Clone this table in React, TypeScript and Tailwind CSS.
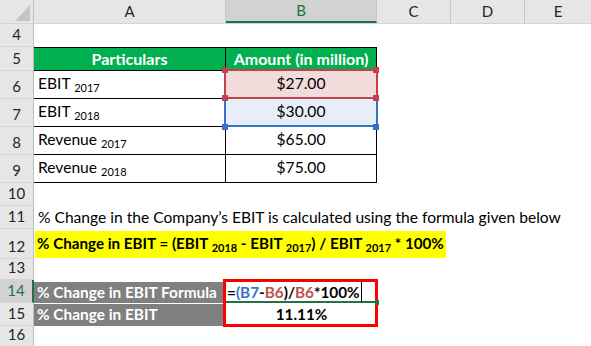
import React from "react";

const font = "font-['Lato',sans-serif]";

function Head({ n, sel }: { n: number; sel?: boolean }) {
  return (
    <div
      className={`w-[34px] shrink-0 flex items-end justify-center pb-[4px] border-b border-b-[#d4d4d4] text-[15px] leading-none ${
        sel
          ? "bg-[#d2d2d2] text-[#217346] border-r-2 border-r-[#217346]"
          : "bg-[#e6e6e6] text-[#262626] border-r border-r-[#bdbdbd]"
      }`}
    >
      {n}
    </div>
  );
}

function Sub({ children }: { children: React.ReactNode }) {
  return <span className="text-[11px] align-[-3px]">{children}</span>;
}

function Row({ n, h, sel, children }: { n: number; h: string; sel?: boolean; children?: React.ReactNode }) {
  return (
    <div className={`flex ${h}`}>
      <Head n={n} sel={sel} />
      {children}
    </div>
  );
}

function DataRow({ n, label, year, value, fill }: { n: number; label: string; year: string; value: string; fill?: string }) {
  return (
    <Row n={n} h="h-[28px]">
      <div className="w-[192px] shrink-0 flex items-end pl-[4px] pb-[5px] border-r border-b border-black leading-none">
        <span>
          {label} <Sub>{year}</Sub>
        </span>
      </div>
      <div className={`w-[151px] shrink-0 flex items-end justify-center pb-[6px] border-r border-b border-black leading-none ${fill ?? ""}`}>
        {value}
      </div>
    </Row>
  );
}

export default function App() {
  return (
    <div className={`relative w-[591px] h-[346px] overflow-hidden bg-white text-black text-[15.6px] ${font}`}>
      {/* column headers */}
      <div className="flex h-[24px] bg-[#e6e6e6] border-b border-[#d4d4d4] text-[15px] text-[#262626]">
        <div className="w-[34px] shrink-0 border-r border-[#bdbdbd] flex items-end justify-end pr-[3px] pb-[2px]">
          <svg width="15" height="16" viewBox="0 0 15 16">
            <polygon points="15,0 15,16 0,16" fill="#c4c4c4" />
          </svg>
        </div>
        <div className="w-[192px] shrink-0 border-r border-[#c6c6c6] flex items-center justify-center">A</div>
        <div className="w-[151px] shrink-0 border-r border-[#c6c6c6] border-b-2 border-b-[#217346] bg-[#d2d2d2] text-[#217346] flex items-center justify-center">
          B
        </div>
        <div className="w-[74px] shrink-0 border-r border-[#c6c6c6] flex items-center justify-center">C</div>
        <div className="w-[74px] shrink-0 border-r border-[#c6c6c6] flex items-center justify-center">D</div>
        <div className="flex-1 flex items-center justify-center">E</div>
      </div>

      <Row n={4} h="h-[23px]" />

      <Row n={5} h="h-[24px]">
        <div className="w-[192px] shrink-0 bg-[#00b050] border-y border-r border-black text-white font-bold text-[16px] flex items-center justify-center">
          Particulars
        </div>
        <div className="w-[151px] shrink-0 bg-[#00b050] border-y border-r border-black text-white font-bold text-[16px] flex items-center justify-center">
          Amount (in million)
        </div>
      </Row>

      <DataRow n={6} label="EBIT" year="2017" value="$27.00" fill="bg-[#f2dcdb]" />
      <DataRow n={7} label="EBIT" year="2018" value="$30.00" fill="bg-[#e8eef8]" />
      <DataRow n={8} label="Revenue" year="2017" value="$65.00" />
      <DataRow n={9} label="Revenue" year="2018" value="$75.00" />

      <Row n={10} h="h-[23px]" />

      <Row n={11} h="h-[23px]">
        <div className="flex-1 flex items-end pl-[4px] pb-[3px] leading-none whitespace-nowrap">
          % Change in the Company’s EBIT is calculated using the formula given below
        </div>
      </Row>

      <Row n={12} h="h-[30px]">
        <div className="flex-1 pl-[1px] pt-[2px] pb-[1px]">
          <div className="w-[411px] h-full bg-[#ffff00] flex items-end pl-[2px] pb-[5px] font-bold text-[15.2px] leading-none whitespace-nowrap">
            <span>
              % Change in EBIT = (EBIT <Sub>2018</Sub> - EBIT <Sub>2017</Sub>) / EBIT <Sub>2017</Sub> * 100%
            </span>
          </div>
        </div>
      </Row>

      <Row n={13} h="h-[21px]" />

      <Row n={14} h="h-[23px]" sel>
        <div className="w-[192px] shrink-0 bg-[#808080] border-t-2 border-white text-white font-bold text-[15.4px] flex items-end pl-[3px] pb-[3px] leading-none whitespace-nowrap">
          % Change in EBIT Formula
        </div>
        <div className="w-[151px] shrink-0 flex items-end pl-[1px] pb-[3px] font-bold text-[15.3px] leading-none whitespace-nowrap">
          <span>
            =<span className="text-[#3a6fc6]">(B7</span>-<span className="text-[#c0504d]">B6</span>)/
            <span className="text-[#c0504d]">B6</span>*100%
          </span>
        </div>
      </Row>

      <Row n={15} h="h-[23px]">
        <div className="w-[192px] shrink-0 bg-[#808080] border-t border-white text-white font-bold text-[15.4px] flex items-end pl-[3px] pb-[4px] leading-none whitespace-nowrap">
          % Change in EBIT
        </div>
        <div className="w-[151px] shrink-0 flex items-end justify-center pb-[4px] font-bold text-[15.3px] leading-none">
          11.11%
        </div>
      </Row>

      <Row n={16} h="h-[21px]" />

      {/* formula reference highlights */}
      <div className="absolute left-[224px] top-[97px] w-[154px] h-[30px] border-2 border-[#3a70c8]" />
      <div className="absolute left-[222px] top-[124px] w-[6px] h-[6px] bg-[#3a70c8]" />
      <div className="absolute left-[373px] top-[124px] w-[6px] h-[6px] bg-[#3a70c8]" />

      <div className="absolute left-[224px] top-[69px] w-[154px] h-[30px] border-2 border-[#c4404a]" />
      <div className="absolute left-[222px] top-[67px] w-[6px] h-[6px] bg-[#c4404a]" />
      <div className="absolute left-[373px] top-[67px] w-[6px] h-[6px] bg-[#c4404a]" />
      <div className="absolute left-[222px] top-[95px] w-[6px] h-[6px] bg-[#c4404a]" />
      <div className="absolute left-[373px] top-[95px] w-[6px] h-[6px] bg-[#c4404a]" />

      {/* active cell + red callout */}
      <div className="absolute left-[223px] top-[279px] w-[155px] h-[48px] border-[3px] border-[#ff0000]" />
      <div className="absolute left-[226px] top-[301px] w-[150px] h-[2px] bg-[#217346]" />
      <div className="absolute left-[375px] top-[300px] w-[4px] h-[5px] bg-[#217346]" />
      <div className="absolute left-[361px] top-[282px] w-[1px] h-[20px] bg-black" />
    </div>
  );
}
